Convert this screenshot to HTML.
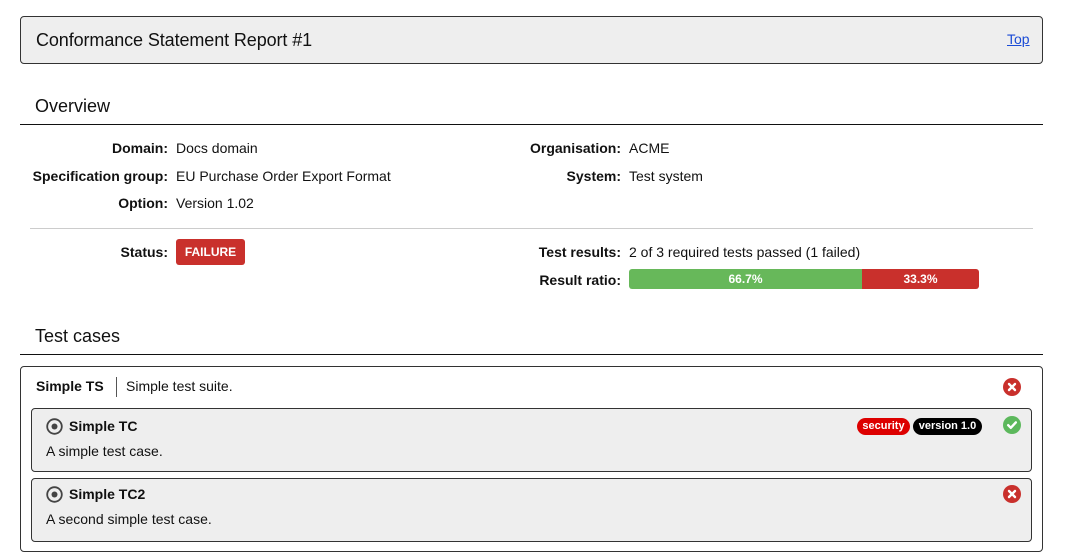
<!DOCTYPE html>
<html><head><meta charset="utf-8"><style>
body{margin:0;width:1065px;height:558px;background:#fff;font-family:"Liberation Sans",Arial,sans-serif;color:#111;position:relative;overflow:hidden}
.a{position:absolute}
.lbl{position:absolute;font-size:14px;font-weight:bold;text-align:right;line-height:16px}
.val{position:absolute;font-size:14px;line-height:16px}
.box{position:absolute;border:1px solid #333;border-radius:4px;box-sizing:border-box}
svg{position:absolute}
</style></head><body>
<div class="box" style="left:20px;top:16px;width:1023px;height:48px;background:#eee"></div>
<div class="a" style="left:36px;top:29px;font-size:18px;line-height:22px;letter-spacing:-0.1px">Conformance Statement Report #1</div>
<div class="a" style="left:1007px;top:31px;font-size:14px;color:#1a4bd6;text-decoration:underline">Top</div>

<div class="a" style="left:35px;top:95px;font-size:18px;line-height:22px">Overview</div>
<div class="a" style="left:20px;top:124px;width:1023px;height:1px;background:#111"></div>

<div class="lbl" style="right:897px;top:140px">Domain:</div><div class="val" style="left:176px;top:140px">Docs domain</div>
<div class="lbl" style="right:897px;top:168px">Specification group:</div><div class="val" style="left:176px;top:168px">EU Purchase Order Export Format</div>
<div class="lbl" style="right:897px;top:195px">Option:</div><div class="val" style="left:176px;top:195px">Version 1.02</div>
<div class="lbl" style="right:444px;top:140px">Organisation:</div><div class="val" style="left:629px;top:140px">ACME</div>
<div class="lbl" style="right:444px;top:168px">System:</div><div class="val" style="left:629px;top:168px">Test system</div>
<div class="a" style="left:30px;top:228px;width:1003px;height:1px;background:#ccc"></div>

<div class="lbl" style="right:897px;top:244px">Status:</div>
<div class="a" style="left:176px;top:239px;width:69px;height:26px;background:#c9302c;border-radius:3px;color:#fff;font-weight:bold;font-size:12px;line-height:26px;text-align:center">FAILURE</div>
<div class="lbl" style="right:444px;top:244px">Test results:</div><div class="val" style="left:629px;top:244px">2 of 3 required tests passed (1 failed)</div>
<div class="lbl" style="right:444px;top:272px">Result ratio:</div>
<div class="a" style="left:629px;top:269px;width:350px;height:20px;border-radius:3px;overflow:hidden;display:flex;color:#fff;font-weight:bold;font-size:12px;line-height:20px;text-align:center">
<div style="width:233px;background:#67b85a">66.7%</div><div style="flex:1;background:#c9302c">33.3%</div></div>

<div class="a" style="left:35px;top:325px;font-size:18px;line-height:22px">Test cases</div>
<div class="a" style="left:20px;top:354px;width:1023px;height:1px;background:#111"></div>

<div class="box" style="left:20px;top:366px;width:1023px;height:186px;background:#fff"></div>
<div class="a" style="left:36px;top:378px;font-size:14px;font-weight:bold">Simple TS</div>
<div class="a" style="left:116px;top:377px;width:1px;height:20px;background:#555"></div>
<div class="a" style="left:126px;top:378px;font-size:14px">Simple test suite.</div>
<svg style="left:1003px;top:378px" width="18" height="18" viewBox="0 0 18 18"><circle cx="9" cy="9" r="9" fill="#c9302c"/><path d="M6 6L12 12M12 6L6 12" stroke="#fff" stroke-width="2.4" stroke-linecap="round"/></svg>

<div class="box" style="left:31px;top:408px;width:1001px;height:64px;background:#eee"></div>
<svg style="left:46px;top:418px" width="17" height="17" viewBox="0 0 17 17"><circle cx="8.5" cy="8.5" r="7.3" fill="none" stroke="#444" stroke-width="1.8"/><circle cx="8.5" cy="8.5" r="3" fill="#444"/></svg>
<div class="a" style="left:69px;top:418px;font-size:14px;font-weight:bold">Simple TC</div>
<div class="a" style="left:46px;top:443px;font-size:14px">A simple test case.</div>
<div class="a" style="left:857px;top:418px;width:53px;height:17px;background:#d00;border-radius:9px;color:#fff;font-weight:bold;font-size:11px;line-height:17px;text-align:center">security</div>
<div class="a" style="left:913px;top:418px;width:69px;height:17px;background:#000;border-radius:9px;color:#fff;font-weight:bold;font-size:11px;line-height:17px;text-align:center">version 1.0</div>
<svg style="left:1003px;top:416px" width="18" height="18" viewBox="0 0 18 18"><circle cx="9" cy="9" r="9" fill="#5cb85c"/><path d="M5.2 9.2L7.8 11.8L12.8 6.4" fill="none" stroke="#fff" stroke-width="2.4" stroke-linecap="round" stroke-linejoin="round"/></svg>

<div class="box" style="left:31px;top:478px;width:1001px;height:64px;background:#eee"></div>
<svg style="left:46px;top:486px" width="17" height="17" viewBox="0 0 17 17"><circle cx="8.5" cy="8.5" r="7.3" fill="none" stroke="#444" stroke-width="1.8"/><circle cx="8.5" cy="8.5" r="3" fill="#444"/></svg>
<div class="a" style="left:69px;top:486px;font-size:14px;font-weight:bold">Simple TC2</div>
<div class="a" style="left:46px;top:511px;font-size:14px">A second simple test case.</div>
<svg style="left:1003px;top:485px" width="18" height="18" viewBox="0 0 18 18"><circle cx="9" cy="9" r="9" fill="#c9302c"/><path d="M6 6L12 12M12 6L6 12" stroke="#fff" stroke-width="2.4" stroke-linecap="round"/></svg>
</body></html>
